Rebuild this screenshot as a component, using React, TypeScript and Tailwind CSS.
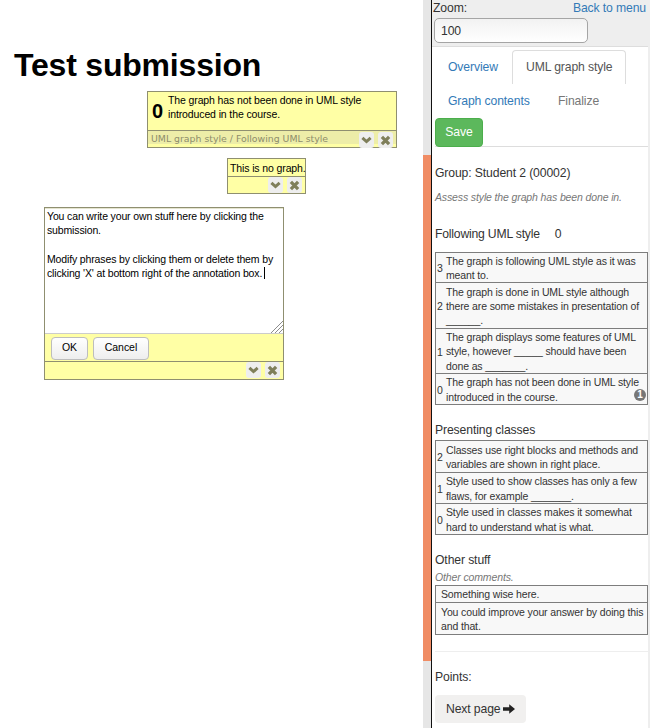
import React from "react";

function Chevron() {
  return (
    <span className="flex h-[16px] w-[15px] items-center justify-center rounded-[3px] bg-[#eeeeee]">
      <svg width="11" height="9" viewBox="0 0 11 9" fill="none" stroke="#7f7f5a" strokeWidth="3">
        <path d="M1.400 1.900 5.500 5.600l4.100-3.700" />
      </svg>
    </span>
  );
}

function Cross() {
  return (
    <span className="flex h-[16px] w-[15px] items-center justify-center rounded-[3px] bg-[#eeeeee]">
      <svg width="11" height="11" viewBox="0 0 11 11" fill="none" stroke="#7f7f5a" strokeWidth="3.3">
        <path d="M1.900 1.900 9.100 9.100M9.100 1.900 1.900 9.100" />
      </svg>
    </span>
  );
}

function Tools() {
  return (
    <div className="ml-auto flex gap-[4px]">
      <Chevron />
      <Cross />
    </div>
  );
}

type PhraseProps = { score?: string; lines: string[]; height: string; badge?: string };

function Phrase({ score, lines, height, badge }: PhraseProps) {
  return (
    <div className={`relative flex items-center border-b border-[#7d7d7d] pt-[1px] ${height}`}>
      {score !== undefined && <span className="w-[10px] pl-[1px] text-[10.500px] leading-[14px]">{score}</span>}
      <div className={`whitespace-nowrap text-[10.500px] tracking-[-0.130px] leading-[14.300px] ${score === undefined ? "pl-[5px]" : ""}`}>
        {lines.map((l) => (
          <div key={l}>{l}</div>
        ))}
      </div>
      {badge && (
        <span className="absolute right-[1px] bottom-[3px] flex h-[12px] w-[12px] items-center justify-center rounded-full bg-[#777777] text-[10px] font-bold leading-none text-white">
          {badge}
        </span>
      )}
    </div>
  );
}

const box = "border border-b-0 border-[#7d7d7d] bg-[#f8f8f8]";

export default function App() {
  return (
    <div className="flex h-[728px] w-[650px] overflow-hidden bg-white font-['Liberation_Sans',Arial,sans-serif] text-[#333333]">
      <main className="relative w-[423px] shrink-0 text-black">
        <h1 className="ml-[14px] pt-[46px] text-[32px] tracking-[-0.200px] leading-[38px] font-bold whitespace-nowrap">Test submission</h1>

        <section className="absolute top-[91px] left-[147px] flex h-[57px] w-[250px] flex-col border border-[#8f8f70] bg-[#ffffa5]">
          <div className="flex h-[38px]">
            <b className="w-[20px] shrink-0 pt-[7px] pl-[4px] text-[20px] leading-[24px]">0</b>
            <p className="pt-[1px] text-[10.500px] tracking-[-0.120px] leading-[14.300px] whitespace-nowrap">
              The graph has not been done in UML style
              <br />
              introduced in the course.
            </p>
          </div>
          <div className="flex h-[14px] border-t border-[#8f8f70] bg-[#ededa8] pt-[1px] pr-[3px] pl-[3px]">
            <span className="font-['DejaVu_Sans',sans-serif] text-[9.350px] leading-[13px] whitespace-nowrap text-[#8d8d6b]">
              UML graph style / Following UML style
            </span>
            <Tools />
          </div>
        </section>

        <section className="absolute top-[158px] left-[227px] flex h-[36px] w-[79px] flex-col border border-[#8f8f70] bg-[#ffffa5]">
          <p className="h-[17px] pt-[1px] pl-[2px] text-[10.500px] tracking-[-0.120px] leading-[16px] whitespace-nowrap">This is no graph.</p>
          <div className="flex h-[17px] border-t border-[#8f8f70] pr-[3px]">
            <Tools />
          </div>
        </section>

        <section className="absolute top-[207px] left-[44px] flex h-[173px] w-[240px] flex-col border border-[#8f8f70] bg-[#ffffa5]">
          <div className="relative h-[126px] border-t border-b border-t-[#e5e5d0] border-b-[#cccccc] bg-white pl-[2px] text-[10.500px] tracking-[-0.140px] leading-[14.200px] whitespace-nowrap">
            <div>You can write your own stuff here by clicking the</div>
            <div>submission.</div>
            <div>&nbsp;</div>
            <div>Modify phrases by clicking them or delete them by</div>
            <div className="flex items-center">
              clicking 'X' at bottom right of the annotation box.
              <span className="ml-[2px] h-[12px] w-px bg-black" />
            </div>
            <svg className="absolute right-0 bottom-0" width="13" height="12" viewBox="0 0 13 12" stroke="#8c8c8c" strokeWidth="1">
              <path d="M1 12 13 0M5 12l8-8M9 12l4-4" />
            </svg>
          </div>
          <div className="flex h-[27px] gap-[5px] pt-[3px] pl-[6px] text-[10.500px] tracking-[-0.050px]">
            <button className="h-[23px] w-[37px] rounded-[4px] border border-[#bdbdbd] bg-linear-to-b from-white to-[#eeeeee] pb-[1px]">OK</button>
            <button className="h-[23px] w-[56px] rounded-[4px] border border-[#bdbdbd] bg-linear-to-b from-white to-[#eeeeee] pb-[1px]">Cancel</button>
          </div>
          <div className="flex h-[18px] border-t border-[#8f8f70] pr-[3px]">
            <Tools />
          </div>
        </section>
      </main>

      <div className="w-[8px] shrink-0 bg-[#e6e6e6] pt-[155px]">
        <div className="h-[506px] bg-[#f08c64]" />
      </div>

      <aside className="flex h-full w-[217px] shrink-0 flex-col border-l border-[#111111] text-[12.200px] tracking-[-0.120px]">
        <header className="h-[47px] border-b border-[#dddddd] bg-[#eeeeee] pl-[1px]">
          <div className="flex justify-between pr-[2px] leading-[16px]">
            <span>Zoom:</span>
            <a className="text-[#337ab7]">Back to menu</a>
          </div>
          <div className="mt-[2px] ml-[1px] h-[25px] w-[154px] rounded-[5px] border border-[#a5a5a5] bg-linear-to-b from-[#f2f2f2] to-white pl-[6px] leading-[24px]">
            100
          </div>
        </header>
        <nav className="flex h-[100px] flex-col pl-[3px]">
          <div className="flex pt-[3px] leading-[34px]">
            <a className="w-[77px] pl-[13px] text-[#337ab7]">Overview</a>
            <span className="h-[34px] w-[114px] rounded-t-[4px] border border-b-0 border-[#dddddd] pl-[13px] leading-[33px] text-[#555555]">UML graph style</span>
          </div>
          <div className="flex leading-[34px]">
            <a className="ml-[13px] w-[110px] text-[#337ab7]">Graph contents</a>
            <span className="text-[#777777]">Finalize</span>
          </div>
          <div className="flex h-[29px] border-b border-[#dddddd]">
            <button className="h-[29px] w-[48px] shrink-0 rounded-[4px] border border-[#4cae4c] bg-[#5cb85c] text-white">Save</button>
          </div>
        </nav>
        <div className="flex flex-col pl-[3px]">
          <div className="mt-[18px] leading-[16px]">Group: Student 2 (00002)</div>
          <i className="mt-[9px] text-[10.500px] tracking-[-0.130px] leading-[14px] text-[#777777]">Assess style the graph has been done in.</i>
          <div className="mt-[22px] flex gap-[15px] leading-[16px]">
            <span className="tracking-[-0.200px]">Following UML style</span>
            <span>0</span>
          </div>
          <div className={`mt-[10px] ${box}`}>
            <Phrase height="h-[30px]" score="3" lines={["The graph is following UML style as it was", "meant to."]} />
            <Phrase height="h-[46px]" score="2" lines={["The graph is done in UML style although", "there are some mistakes in presentation of", "______."]} />
            <Phrase height="h-[45px]" score="1" lines={["The graph displays some features of UML", "style, however _____ should have been", "done as _______."]} />
            <Phrase height="h-[31px]" score="0" badge="1" lines={["The graph has not been done in UML style", "introduced in the course."]} />
          </div>
          <div className="mt-[17px] leading-[16px]">Presenting classes</div>
          <div className={`mt-[2px] ${box}`}>
            <Phrase height="h-[32px]" score="2" lines={["Classes use right blocks and methods and", "variables are shown in right place."]} />
            <Phrase height="h-[31px]" score="1" lines={["Style used to show classes has only a few", "flaws, for example _______."]} />
            <Phrase height="h-[31px]" score="0" lines={["Style used in classes makes it somewhat", "hard to understand what is what."]} />
          </div>
          <div className="mt-[17px] leading-[16px]">Other stuff</div>
          <i className="mt-[2px] text-[10.500px] tracking-[-0.130px] leading-[14px] text-[#777777]">Other comments.</i>
          <div className={`mt-[1px] ${box}`}>
            <Phrase height="h-[17px]" lines={["Something wise here."]} />
            <Phrase height="h-[32px]" lines={["You could improve your answer by doing this", "and that."]} />
          </div>
          <hr className="mt-[16px] border-[#eeeeee]" />
          <div className="mt-[17px] leading-[16px]">Points:</div>
          <button className="mt-[10px] flex h-[28px] w-[91px] items-center gap-[3px] rounded-[4px] bg-[#f1f0ef] pl-[11px] whitespace-nowrap">
            Next page
            <svg width="12" height="10" viewBox="0 0 12 10" fill="#222222">
              <path d="M0 3.300h6.200V.2L12 5 6.200 9.800V6.700H0z" />
            </svg>
          </button>
        </div>
      </aside>
      <div className="w-[2px] bg-[#eeeeee]" />
    </div>
  );
}
